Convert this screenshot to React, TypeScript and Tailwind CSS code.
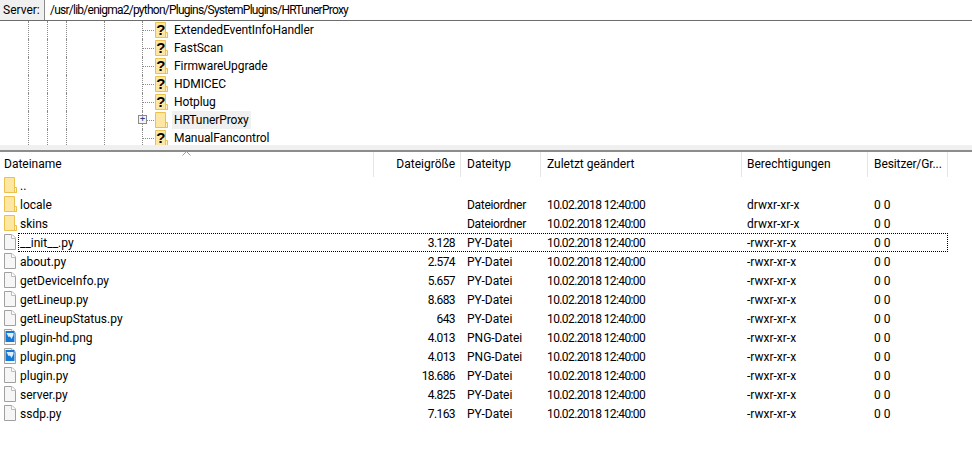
import React from 'react';

const treeItems = [
  { name: 'ExtendedEventInfoHandler', unknown: true },
  { name: 'FastScan', unknown: true },
  { name: 'FirmwareUpgrade', unknown: true },
  { name: 'HDMICEC', unknown: true },
  { name: 'Hotplug', unknown: true },
  { name: 'HRTunerProxy', unknown: false },
  { name: 'ManualFancontrol', unknown: true },
];

type FileRow = { name: string; size: string; type: string; perms: string; kind: 'folder' | 'file' | 'png'; focus?: boolean };

const files: FileRow[] = [
  { name: '..', size: '', type: '', perms: '', kind: 'folder' },
  { name: 'locale', size: '', type: 'Dateiordner', perms: 'drwxr-xr-x', kind: 'folder' },
  { name: 'skins', size: '', type: 'Dateiordner', perms: 'drwxr-xr-x', kind: 'folder' },
  { name: '__init__.py', size: '3.128', type: 'PY-Datei', perms: '-rwxr-xr-x', kind: 'file', focus: true },
  { name: 'about.py', size: '2.574', type: 'PY-Datei', perms: '-rwxr-xr-x', kind: 'file' },
  { name: 'getDeviceInfo.py', size: '5.657', type: 'PY-Datei', perms: '-rwxr-xr-x', kind: 'file' },
  { name: 'getLineup.py', size: '8.683', type: 'PY-Datei', perms: '-rwxr-xr-x', kind: 'file' },
  { name: 'getLineupStatus.py', size: '643', type: 'PY-Datei', perms: '-rwxr-xr-x', kind: 'file' },
  { name: 'plugin-hd.png', size: '4.013', type: 'PNG-Datei', perms: '-rwxr-xr-x', kind: 'png' },
  { name: 'plugin.png', size: '4.013', type: 'PNG-Datei', perms: '-rwxr-xr-x', kind: 'png' },
  { name: 'plugin.py', size: '18.686', type: 'PY-Datei', perms: '-rwxr-xr-x', kind: 'file' },
  { name: 'server.py', size: '4.825', type: 'PY-Datei', perms: '-rwxr-xr-x', kind: 'file' },
  { name: 'ssdp.py', size: '7.163', type: 'PY-Datei', perms: '-rwxr-xr-x', kind: 'file' },
];

const FolderIcon = ({ unknown = false }: { unknown?: boolean }) => (
  <svg width="13" height="16" viewBox="0 0 13 16" className="shrink-0">
    <path d="M0.5 0.5H10.5V12.5H12.5V15.5H0.5Z" fill="#fde7a3" stroke="#ecc04c" />
    <path d="M10.5 12.5V10.5H12.5V15.5H10.5Z" fill="#fff3c9" stroke="#ecc04c" />
    {unknown && (
      <text x="5.8" y="13" textAnchor="middle" fontSize="15" fontWeight="700" fill="#000" fontFamily="'Liberation Sans', sans-serif">?</text>
    )}
  </svg>
);

const DocIcon = ({ png = false }: { png?: boolean }) => (
  <svg width="12" height="16" viewBox="0 0 12 16" className="shrink-0">
    <path d="M0.5 0.5H8L11.5 4V15.5H0.5Z" fill="#f6f6f6" stroke="#a0a0a0" />
    <path d="M7.5 0.5V4.5H11.5" fill="#fff" stroke="#bcbcbc" />
    {png && (
      <>
        <rect x="1.5" y="2" width="9" height="11" fill="#1478d4" />
        <path d="M2.5 4H9.5V6L7.5 10L6 7.5L4.5 8Z" fill="#dcefff" />
      </>
    )}
  </svg>
);

const cols = 'grid grid-cols-[374px_87px_80px_201px_126px_80px] w-[948px]';

const App: React.FC = () => {
  return (
    <div className="w-[972px] h-[453px] overflow-hidden bg-white text-[12px] text-black font-['Roboto','Liberation_Sans',sans-serif]">
      {/* Server path bar */}
      <div className="flex h-[21px] bg-[#f0f0f0] border-b border-[#6d6d6d]">
        <div className="w-[45px] pl-[3px] leading-[20px] border-r border-[#8a8a8a]">Server:</div>
        <div className="flex-1 bg-white pl-[5px] leading-[20px] tracking-[-0.75px]">/usr/lib/enigma2/python/Plugins/SystemPlugins/HRTunerProxy</div>
      </div>

      {/* Directory tree */}
      <div className="h-[124px] overflow-hidden">
        {treeItems.map((item) => (
          <div key={item.name} className="flex h-[18px] pl-[28px]">
            <span className="w-[19px] border-l border-dotted border-[#8a8a8a]" />
            <span className="w-[19px] border-l border-dotted border-[#8a8a8a]" />
            <span className="w-[38px] border-l border-dotted border-[#8a8a8a]" />
            <span className="w-[38px] border-l border-dotted border-[#8a8a8a]" />
            <span className="relative flex items-center w-[13px] border-l border-dotted border-[#8a8a8a]">
              <span className="w-[11px] border-t border-dotted border-[#8a8a8a]" />
              {!item.unknown && (
                <span className="absolute -left-[5px] top-[4px] flex items-center justify-center w-[9px] h-[9px] bg-[#f4f4f4] border border-[#8a8a8a] text-[#2b3f8f] text-[9px] leading-none">+</span>
              )}
            </span>
            <span className="flex items-center w-[17px]"><FolderIcon unknown={item.unknown} /></span>
            <span className={item.unknown ? 'px-[2px] leading-[18px] tracking-[-0.08px]' : 'px-[2px] leading-[18px] tracking-[-0.08px] bg-[#f0f0f0]'}>{item.name}</span>
          </div>
        ))}
      </div>

      {/* Splitter */}
      <div className="h-[7px] bg-[#f0f0f0] border-b-2 border-[#8c8c8c]" />

      {/* File list header */}
      <div className={`${cols} relative h-[24px] leading-[25px]`}>
        <svg width="9" height="5" viewBox="0 0 9 5" className="absolute left-[182px] -top-[1px]">
          <path d="M0.5 4.5L4.5 0.5L8.5 4.5" fill="none" stroke="#9a9a9a" />
        </svg>
        <div className="pl-[4px] border-r border-[#e5e5e5]">Dateiname</div>
        <div className="pr-[5px] text-right border-r border-[#e5e5e5]">Dateigröße</div>
        <div className="pl-[6px] border-r border-[#e5e5e5]">Dateityp</div>
        <div className="pl-[6px] border-r border-[#e5e5e5]">Zuletzt geändert</div>
        <div className="pl-[5px] border-r border-[#e5e5e5]">Berechtigungen</div>
        <div className="pl-[6px] border-r border-[#e5e5e5] tracking-[-0.1px]">Besitzer/Gr...</div>
      </div>

      {/* File list rows */}
      <div>
        {files.map((f) => (
          <div key={f.name} className={`${cols} relative h-[19px] leading-[21px]`}>
            {f.focus && <div className="absolute left-[18px] right-0 top-0 bottom-0 border border-dotted border-black" />}
            <div className="flex gap-[3px] pl-[4px] h-[19px] items-start">
              <span className="w-[13px] pt-[1px]">
                {f.kind === 'folder' ? <FolderIcon /> : <DocIcon png={f.kind === 'png'} />}
              </span>
              <span>{f.name}</span>
            </div>
            <div className="pr-[6px] text-right tracking-[-0.6px]">{f.size}</div>
            <div className={f.kind === 'folder' ? 'pl-[6px] tracking-[-0.3px]' : 'pl-[6px]'}>{f.type}</div>
            <div className="pl-[6px] tracking-[-0.6px]">{f.name === '..' ? '' : '10.02.2018 12:40:00'}</div>
            <div className="pl-[5px]">{f.perms}</div>
            <div className="pl-[6px]">{f.name === '..' ? '' : '0 0'}</div>
          </div>
        ))}
      </div>
    </div>
  );
};

export default App;
